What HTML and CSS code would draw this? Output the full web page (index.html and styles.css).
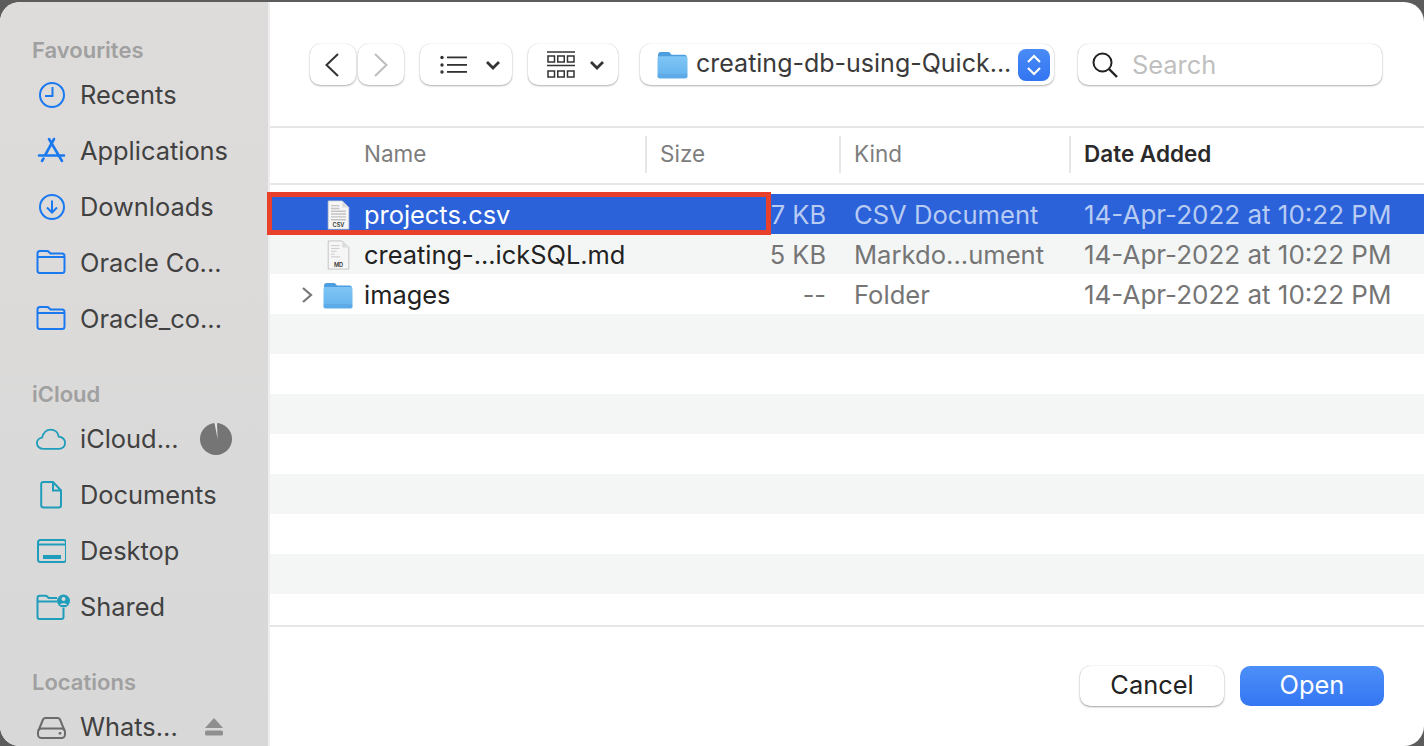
FILE: index.html
```html
<!doctype html>
<html>
<head>
<meta charset="UTF-8" />
<title>Open</title>
<link rel="stylesheet" href="styles.css">
</head>
<body>
<svg class="defs" width="0" height="0">
	<defs>
		<linearGradient id="folder-body" x1="0" y1="0" x2="0" y2="1">
			<stop offset="0" stop-color="#7fc6f5"/>
			<stop offset="1" stop-color="#62b0ec"/>
		</linearGradient>
		<symbol id="folder-blue" viewBox="0 0 30 27">
			<path d="M1 4C1 2 2 1 3.5 1h7c1 0 1.600.3 2.200 1l1.400 1.500h12.400C28.100 3.500 29 4.400 29 6v4H1z" fill="#4d9ee0"/>
			<rect x="0.500" y="5" width="29" height="21.500" rx="2" fill="url(#folder-body)"/>
			<path d="M0.800 23h28.400M0.700 25h28.600" stroke="#4f9cdc" stroke-width="0.700" fill="none"/>
		</symbol>
		<symbol id="side-folder" viewBox="0 2 30 26">
			<path d="M1.500 9V5.500C1.500 3.800 2.400 3 3.900 3h6.900c1 0 1.600.3 2.200 1l1.400 1.500h11.700c1.400 0 2.400.9 2.400 2.500v14.500c0 1.600-.8 2.500-2.400 2.500H3.900c-1.600 0-2.400-.9-2.400-2.500zM1.500 9h27" fill="none" stroke="#1a79ef" stroke-width="2"/>
		</symbol>
	</defs>
</svg>
<div id="dialog">
	<div class="sidebar">
		<div class="side-title">Favourites</div>
		<div class="side-item">
			<svg class="side-icon" viewBox="0 0 30 30"><g fill="none" stroke="#1a79ef" stroke-width="2"><circle cx="16" cy="15" r="12"/><path d="M16.500 7v9H9"/></g></svg>
			<span>Recents</span>
		</div>
		<div class="side-item">
			<svg class="side-icon" viewBox="0 0 30 30"><g fill="none" stroke="#1a79ef" stroke-width="2.600" stroke-linecap="round"><path d="M13 3l13 22M18 3L9.500 18.500M7.500 22.500L6 25M3 19.500h25"/></g></svg>
			<span>Applications</span>
		</div>
		<div class="side-item">
			<svg class="side-icon" viewBox="0 0 30 30"><g fill="none" stroke="#1a79ef" stroke-width="2"><circle cx="16" cy="15" r="12"/><path d="M16 8.500v12M11 15.500l5 5 5-5"/></g></svg>
			<span>Downloads</span>
		</div>
		<div class="side-item">
			<svg class="side-icon"><use href="#side-folder"/></svg>
			<span>Oracle Co...</span>
		</div>
		<div class="side-item">
			<svg class="side-icon"><use href="#side-folder"/></svg>
			<span>Oracle_co...</span>
		</div>

		<div class="side-title next">iCloud</div>
		<div class="side-item">
			<svg class="side-icon" viewBox="0 0 32 30"><path d="M8 25.500c-4 0-7-2.700-7-6 0-3.200 2.500-5.700 5.500-6C8 8 11.500 5 15.500 5c4.500 0 8 3 8.700 7.500 3.800.2 6.800 3 6.800 6.500 0 3.800-2.700 6.500-6.500 6.500z" fill="none" stroke="#1f9dbb" stroke-width="2"/></svg>
			<span class="grow">iCloud...</span>
			<svg class="pie" viewBox="0 0 32 32"><circle cx="16" cy="16" r="16" fill="#757575"/><path d="M14.500 0L17 0l.600 16z" fill="#e4e4e4"/></svg>
		</div>
		<div class="side-item">
			<svg class="side-icon" viewBox="0 0 30 30"><path d="M7.500 2h9.500l8 8.500v14.800c0 1.500-.8 2.200-2.300 2.200H7.500C6 27.500 5.200 26.800 5.200 25.300V4.300C5.200 2.800 6 2 7.500 2zM17 2.500v8h8" fill="none" stroke="#1f9dbb" stroke-width="2"/></svg>
			<span>Documents</span>
		</div>
		<div class="side-item">
			<svg class="side-icon" viewBox="0 0 30 30"><g fill="none" stroke="#1f9dbb" stroke-width="2"><rect x="2" y="4" width="28" height="22" rx="2.500"/><path d="M2 8.500h28"/></g><rect x="7" y="19" width="18" height="4" fill="#1f9dbb"/></svg>
			<span>Desktop</span>
		</div>
		<div class="side-item">
			<svg class="side-icon shared" viewBox="0 0 34 30"><path d="M21 9.500H1.500M1.500 9.500V6c0-1.500.8-2.300 2.300-2.300h5.500c1 0 1.500.3 2.100 1l1.300 1.300H21M1.500 9.500V25c0 1.300.7 2 2 2h22c1.300 0 2-.7 2-2v-9" fill="none" stroke="#1f9dbb" stroke-width="2"/><circle cx="27.500" cy="9" r="6.500" fill="#1f9dbb"/><circle cx="27.500" cy="7" r="2" fill="#dadada"/><path d="M24 13c.5-2.500 6.500-2.500 7 0z" fill="#dadada"/></svg>
			<span>Shared</span>
		</div>

		<div class="side-title next">Locations</div>
		<div class="side-item">
			<svg class="side-icon" viewBox="0 0 30 30"><g fill="none" stroke="#6b6b6b" stroke-width="2"><path d="M2.500 18.500L7 7.500C7.500 6.500 8.100 6 9.500 6h12c1.400 0 2 .5 2.500 1.500l4.500 11"/><rect x="2" y="16.500" width="27" height="9.500" rx="3.500"/></g><circle cx="24" cy="21.300" r="1.400" fill="#6b6b6b"/></svg>
			<span class="grow">Whats...</span>
			<svg class="eject" viewBox="0 0 20 20"><path d="M10 1l9 10H1z" fill="#8f8f8f"/><rect x="1" y="13.500" width="18" height="5" rx="1.500" fill="#8f8f8f"/></svg>
		</div>
	</div>

	<div class="main">
		<div class="toolbar">
			<div class="btn btn-nav">
				<svg class="back" width="16" height="24" viewBox="0 0 16 24"><path d="M14 1L2.500 12 14 23" fill="none" stroke="#333" stroke-width="2"/></svg>
			</div>
			<div class="btn btn-nav next-nav">
				<svg width="16" height="24" viewBox="0 0 16 24"><path d="M2 1l11.500 11L2 23" fill="none" stroke="#bdbdbd" stroke-width="2"/></svg>
			</div>
			<div class="btn btn-view">
				<svg width="28" height="20" viewBox="0 0 28 20"><g fill="#333"><circle cx="2" cy="2.500" r="1.700"/><circle cx="2" cy="10" r="1.700"/><circle cx="2" cy="17" r="1.700"/><rect x="7" y="1.500" width="20" height="1.800"/><rect x="7" y="9" width="20" height="1.800"/><rect x="7" y="16" width="20" height="1.800"/></g></svg>
				<svg class="caret" width="16" height="10" viewBox="0 0 16 10"><path d="M2 2l6 6 6-6" fill="none" stroke="#333" stroke-width="2.800"/></svg>
			</div>
			<div class="btn btn-grid">
				<svg width="28" height="27" viewBox="0 0 28 27"><g fill="none" stroke="#333" stroke-width="1.500"><path d="M0 1h28M0 14.500h28"/><rect x="1" y="5" width="6.500" height="6"/><rect x="10.750" y="5" width="6.500" height="6"/><rect x="20.500" y="5" width="6.500" height="6"/><rect x="1" y="20" width="6.500" height="6"/><rect x="10.750" y="20" width="6.500" height="6"/><rect x="20.500" y="20" width="6.500" height="6"/></g></svg>
				<svg class="caret" width="16" height="10" viewBox="0 0 16 10"><path d="M2 2l6 6 6-6" fill="none" stroke="#333" stroke-width="2.800"/></svg>
			</div>
			<div class="btn btn-path">
				<svg class="path-folder"><use href="#folder-blue"/></svg>
				<span class="path-name">creating-db-using-Quick...</span>
				<div class="stepper">
					<svg width="16" height="26" viewBox="0 0 16 26"><path d="M2 10l6-6 6 6M2 16l6 6 6-6" fill="none" stroke="#fff" stroke-width="2.200"/></svg>
				</div>
			</div>
			<div class="search">
				<svg width="26" height="26" viewBox="0 0 26 26"><g fill="none" stroke="#222" stroke-width="2"><circle cx="10.500" cy="10.500" r="9"/><path d="M17 17l8 8" stroke-width="2.400"/></g></svg>
				<span>Search</span>
			</div>
		</div>

		<div class="cols">
			<div class="col col-name">Name</div>
			<div class="col">Size</div>
			<div class="col">Kind</div>
			<div class="col col-sort">Date Added</div>
		</div>

		<div class="list">
			<div class="row selected">
				<div class="cell-name">
					<svg class="doc" viewBox="0 0 24 32"><path d="M1 1h15l7 7v23H1z" fill="#f6f6f6" stroke="#cfcfcf" stroke-width="0.800"/><path d="M16 1v7h7z" fill="#dcdcdc"/><path d="M4 6h9M4 9h9M4 12h16M4 15h16M4 18h16M4 21h16" stroke="#c4c4c4" stroke-width="1.500"/><text x="12" y="29" class="doc-label">CSV</text></svg>
					<span>projects.csv</span>
				</div>
				<div class="cell-size">7 KB</div>
				<div class="cell-kind">CSV Document</div>
				<div class="cell-date">14-Apr-2022 at 10:22 PM</div>
			</div>
			<div class="row">
				<div class="cell-name">
					<svg class="doc" viewBox="0 0 24 32"><path d="M1 1h15l7 7v23H1z" fill="#f6f6f6" stroke="#b5b5b5" stroke-width="0.800"/><path d="M16 1v7h7z" fill="#dcdcdc"/><path d="M4 6h9M4 9h9M4 12h6M4 15h4M4 18h10" stroke="#c8c8c8" stroke-width="1"/><text x="12" y="29" class="doc-label">MD</text></svg>
					<span>creating-...ickSQL.md</span>
				</div>
				<div class="cell-size">5 KB</div>
				<div class="cell-kind">Markdo...ument</div>
				<div class="cell-date">14-Apr-2022 at 10:22 PM</div>
			</div>
			<div class="row">
				<div class="cell-name">
					<svg class="arrow" width="12" height="18" viewBox="0 0 12 18"><path d="M2 2l8 7-8 7" fill="none" stroke="#777" stroke-width="2.200"/></svg>
					<svg class="row-folder"><use href="#folder-blue"/></svg>
					<span>images</span>
				</div>
				<div class="cell-size">--</div>
				<div class="cell-kind">Folder</div>
				<div class="cell-date">14-Apr-2022 at 10:22 PM</div>
			</div>
			<div class="row"></div>
			<div class="row"></div>
			<div class="row"></div>
			<div class="row"></div>
			<div class="row"></div>
			<div class="row"></div>
			<div class="row"></div>
			<div class="row"></div>
		</div>

		<div class="footer">
			<div class="action">Cancel</div>
			<div class="action primary">Open</div>
		</div>
	</div>
	<div id="highlight"></div>
</div>
</body>
</html>
```

FILE: styles.css
```css
html, body{
	margin:0;
	padding:0;
	height:100%;
	overflow:hidden;
}
body{
	background-color:#5c5c5c;
	font-family:Inter, "Liberation Sans", sans-serif;
	font-size:25.4px;
	color:#222;
}
.defs{
	position:absolute;
}
#dialog{
	position:relative;
	display:flex;
	height:744px;
	margin-top:2px;
	border-radius:20px;
	overflow:hidden;
	background-color:#fff;
}
.sidebar{
	flex:none;
	width:268px;
	height:744px;
	box-sizing:border-box;
	padding-top:31px;
	background:linear-gradient(#dedcdb, #d8d8d8);
	overflow:hidden;
}
.side-title{
	height:34px;
	line-height:34px;
	padding-left:32px;
	font-size:22px;
	font-weight:600;
	color:#a0a0a0;
}
.side-title.next{
	margin-top:30px;
}
.side-item{
	display:flex;
	align-items:center;
	height:56px;
	padding:0 36px;
	color:#414141;
}
.side-item span{
	margin-bottom:2px;
}
.side-item span.grow{
	flex:1;
}
.side-icon{
	flex:none;
	width:30px;
	height:30px;
	margin-right:14px;
}
.side-icon.shared{
	width:34px;
	margin-right:10px;
}
.pie{
	flex:none;
	width:32px;
	height:32px;
}
.eject{
	flex:none;
	width:20px;
	height:20px;
	margin-right:8px;
}
.main{
	flex:1;
	min-width:0;
	display:flex;
	flex-direction:column;
	border-left:2px solid #eee;
}
.toolbar{
	flex:none;
	display:flex;
	align-items:flex-start;
	height:126px;
	box-sizing:border-box;
	padding:42px 0 0 40px;
	border-bottom:2px solid #e6e6e6;
}
.btn{
	display:flex;
	align-items:center;
	justify-content:center;
	box-sizing:border-box;
	height:41px;
	background-color:#fff;
	border-radius:10px;
	box-shadow:0 1px 2px rgba(0,0,0,.3), 0 0 1px rgba(0,0,0,.2);
}
.btn-nav{
	width:46px;
}
.back{
	margin-right:2px;
}
.next-nav{
	margin-left:2px;
}
.btn-view{
	width:92px;
	margin-left:16px;
	padding-left:8px;
}
.btn-view .caret{
	margin-left:17px;
}
.btn-grid{
	width:90px;
	margin-left:16px;
	padding-left:6px;
}
.btn-grid .caret{
	margin-left:14px;
}
.btn-path{
	width:414px;
	margin-left:22px;
	padding:0 4px 0 17px;
	justify-content:flex-start;
}
.path-folder{
	flex:none;
	width:31px;
	height:28px;
}
.path-name{
	flex:1;
	margin:0 0 3px 8px;
	font-size:25px;
	color:#3a3a3a;
	white-space:nowrap;
}
.stepper{
	flex:none;
	display:flex;
	align-items:center;
	justify-content:center;
	width:32px;
	height:32px;
	border-radius:8px;
	background:linear-gradient(#4a8bf7, #3275f0);
}
.search{
	display:flex;
	align-items:center;
	box-sizing:border-box;
	width:304px;
	height:41px;
	margin-left:24px;
	padding-left:14px;
	background-color:#fff;
	border-radius:10px;
	box-shadow:0 1px 2px rgba(0,0,0,.3), 0 0 1px rgba(0,0,0,.25);
	color:#bfbfbf;
}
.search span{
	margin-left:14px;
}
.cols{
	flex:none;
	display:grid;
	grid-template-columns:375px 194px 230px 1fr;
	height:55px;
	align-items:center;
	border-bottom:2px solid #e6e6e6;
	font-size:22.5px;
	color:#7d7d7d;
}
.col{
	height:37px;
	line-height:35px;
	margin-bottom:2px;
	padding-left:13px;
	border-left:2px solid #e6e6e6;
}
.col-name{
	padding-left:94px;
	border-left:0;
}
.col-sort{
	font-weight:600;
	color:#2a2a2a;
}
.list{
	flex:1;
	min-height:0;
	margin-top:9px;
	overflow:hidden;
}
.row{
	display:grid;
	grid-template-columns:375px 194px 230px 1fr;
	align-items:center;
	height:40px;
	white-space:nowrap;
}
.row:nth-child(2n){
	background-color:#f4f5f5;
}
.cell-name{
	position:relative;
	display:flex;
	align-items:center;
	padding-left:94px;
}
.cell-size{
	text-align:right;
	padding-right:13px;
	color:#757575;
}
.cell-kind{
	padding-left:15px;
	font-size:25.6px;
	color:#757575;
}
.cell-date{
	padding-left:15px;
	font-size:26px;
	color:#757575;
}
.doc{
	position:absolute;
	left:57px;
	top:1px;
	width:23px;
	height:30px;
}
.doc-label{
	font-size:6px;
	font-weight:600;
	text-anchor:middle;
	fill:#333;
}
.arrow{
	position:absolute;
	left:31px;
	top:7px;
}
.row-folder{
	position:absolute;
	left:53px;
	top:3px;
	width:30px;
	height:27px;
}
.selected{
	background-color:#2b62d9;
	color:#fff;
}
.selected .cell-size,
.selected .cell-kind,
.selected .cell-date{
	color:#b8cbf3;
}
.footer{
	flex:none;
	display:flex;
	justify-content:flex-end;
	gap:16px;
	height:121px;
	box-sizing:border-box;
	padding:39px 40px 0 0;
	border-top:2px solid #e6e6e6;
}
.action{
	width:144px;
	height:40px;
	line-height:37px;
	text-align:center;
	background-color:#fff;
	border-radius:10px;
	box-shadow:0 1px 2px rgba(0,0,0,.35), 0 0 1px rgba(0,0,0,.25);
}
.primary{
	background:linear-gradient(#4d8ff8, #3476f3);
	color:#fff;
	box-shadow:none;
}
#highlight{
	position:absolute;
	left:267px;
	top:190px;
	width:504px;
	height:43px;
	box-sizing:border-box;
	border:5px solid #e8402a;
}
```
